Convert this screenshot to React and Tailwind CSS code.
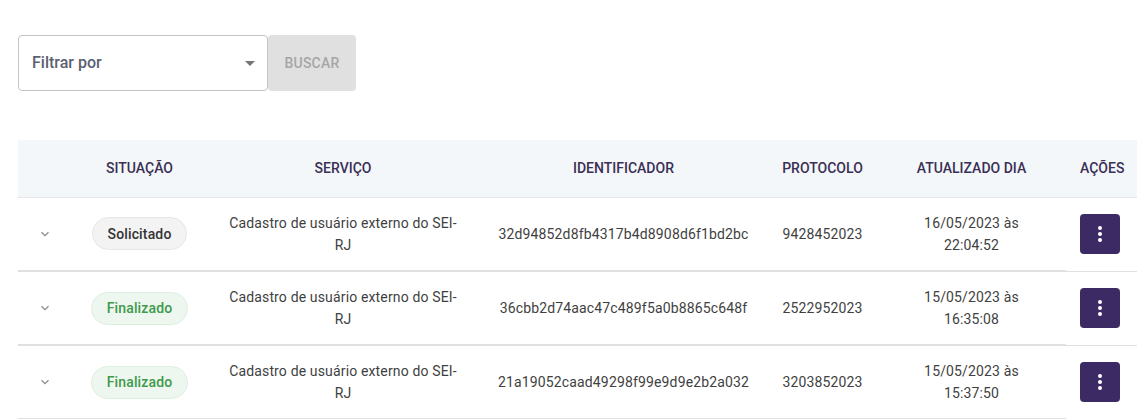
import React from "react";

const rows = [
  { status: "Solicitado", id: "32d94852d8fb4317b4d8908d6f1bd2bc", proto: "9428452023", date: "16/05/2023 às", time: "22:04:52" },
  { status: "Finalizado", id: "36cbb2d74aac47c489f5a0b8865c648f", proto: "2522952023", date: "15/05/2023 às", time: "16:35:08" },
  { status: "Finalizado", id: "21a19052caad49298f99e9d9e2b2a032", proto: "3203852023", date: "15/05/2023 às", time: "15:37:50" },
];

function Chevron() {
  return (
    <svg width="14" height="14" viewBox="0 0 24 24" className="block">
      <path d="M6 9l6 6 6-6" fill="none" stroke="#8a8a8a" strokeWidth="2" />
    </svg>
  );
}

function Dots() {
  return (
    <svg width="6" height="18" viewBox="0 0 6 18">
      <circle cx="3" cy="3" r="2" fill="#fff" />
      <circle cx="3" cy="9" r="2" fill="#fff" />
      <circle cx="3" cy="15" r="2" fill="#fff" />
    </svg>
  );
}

export default function App() {
  return (
    <div className="w-[1137px] h-[419px] overflow-hidden bg-white" style={{ fontFamily: "Roboto, 'Liberation Sans', sans-serif" }}>
      <div className="pt-[35px] pl-[18px] flex">
        <div className="w-[250px] h-[56px] border border-[#c4c4c4] rounded-[4px] flex items-center justify-between pl-[13px] pr-[12px]">
          <span className="text-[16px] font-medium text-[#5a6170]">Filtrar por</span>
          <svg width="10" height="5" viewBox="0 0 10 5"><path d="M0 0h10L5 5z" fill="#757575" /></svg>
        </div>
        <div className="w-[88px] h-[56px] bg-[#e0e0e0] rounded-[4px] flex items-center justify-center text-[14px] font-medium text-[#a6a6a6] tracking-[0.2px]">BUSCAR</div>
      </div>
      <div className="mt-[49px] ml-[18px]">
        <table className="border-collapse table-fixed w-[1119px]">
          <colgroup>
            <col className="w-[54px]" />
            <col className="w-[135px]" />
            <col className="w-[272px]" />
            <col className="w-[289px]" />
            <col className="w-[109px]" />
            <col className="w-[189px]" />
            <col className="w-[71px]" />
          </colgroup>
          <thead>
            <tr className="bg-[#f4f7fa] h-[57px] border-b border-[#e3e6ea] text-[14px] font-medium text-[#3a2f55]">
              <th></th>
              <th className="text-center font-medium">SITUAÇÃO</th>
              <th className="text-center font-medium">SERVIÇO</th>
              <th className="text-center font-medium">IDENTIFICADOR</th>
              <th className="text-center font-medium">PROTOCOLO</th>
              <th className="text-center font-medium">ATUALIZADO DIA</th>
              <th className="text-left pl-[14px] font-medium">AÇÕES</th>
            </tr>
          </thead>
          <tbody>
            {rows.map((r, i) => (
              <tr key={i} className="h-[74px] text-[14px] text-[#3f3f3f] leading-[22px] tracking-[0.15px]">
                <td className="border-b-2 border-[#e0e0e0]">
                  <div className="flex justify-center"><Chevron /></div>
                </td>
                <td className="border-b-2 border-[#e0e0e0] text-center">
                  {r.status === "Solicitado" ? (
                    <span className="inline-flex items-center h-[33px] px-[15px] rounded-full bg-[#f3f3f3] border border-[#e6e6e6] font-medium text-[#333]">Solicitado</span>
                  ) : (
                    <span className="inline-flex items-center h-[33px] px-[15px] rounded-full bg-[#eef7ef] border border-[#dcefdf] font-medium text-[#3d9a4c]">Finalizado</span>
                  )}
                </td>
                <td className="border-b-2 border-[#e0e0e0] text-center">
                  <div className="w-[236px] mx-auto">Cadastro de usuário externo do SEI-RJ</div>
                </td>
                <td className="border-b-2 border-[#e0e0e0] text-center">{r.id}</td>
                <td className="border-b-2 border-[#e0e0e0] text-center">{r.proto}</td>
                <td className="border-b-2 border-[#e0e0e0] text-center">
                  <div>{r.date}</div>
                  <div>{r.time}</div>
                </td>
                <td className="border-b border-[#e0e0e0] pl-[14px]">
                  <div className="w-[40px] h-[40px] rounded-[4px] bg-[#3b2a63] flex items-center justify-center"><Dots /></div>
                </td>
              </tr>
            ))}
          </tbody>
        </table>
      </div>
    </div>
  );
}
